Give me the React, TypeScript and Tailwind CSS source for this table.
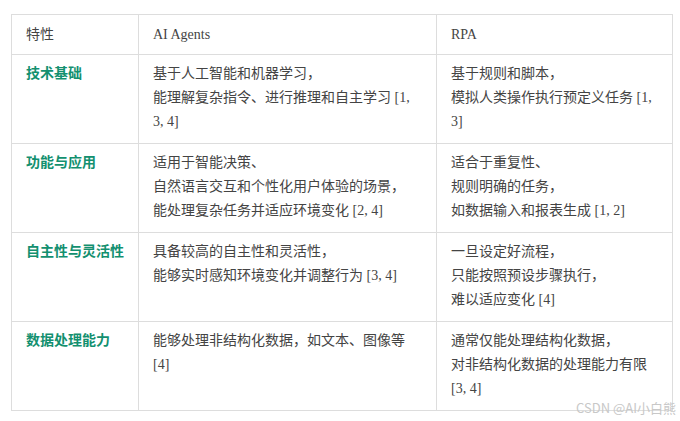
import React from 'react';

type Row = {
    feature: string;
    agents: string[];
    rpa: string[];
};

const rows: Row[] = [
    {
        feature: '技术基础',
        agents: ['基于人工智能和机器学习，', '能理解复杂指令、进行推理和自主学习 [1,', '3, 4]'],
        rpa: ['基于规则和脚本，', '模拟人类操作执行预定义任务 [1,', '3]'],
    },
    {
        feature: '功能与应用',
        agents: ['适用于智能决策、', '自然语言交互和个性化用户体验的场景，', '能处理复杂任务并适应环境变化 [2, 4]'],
        rpa: ['适合于重复性、', '规则明确的任务，', '如数据输入和报表生成 [1, 2]'],
    },
    {
        feature: '自主性与灵活性',
        agents: ['具备较高的自主性和灵活性，', '能够实时感知环境变化并调整行为 [3, 4]'],
        rpa: ['一旦设定好流程，', '只能按照预设步骤执行，', '难以适应变化 [4]'],
    },
    {
        feature: '数据处理能力',
        agents: ['能够处理非结构化数据，如文本、图像等', '[4]'],
        rpa: ['通常仅能处理结构化数据，', '对非结构化数据的处理能力有限', '[3, 4]'],
    },
];

const Lines: React.FC<{ lines: string[] }> = ({ lines }) => (
    <>
        {lines.map((l, i) => (
            <div key={i} className="whitespace-nowrap">{l}</div>
        ))}
    </>
);

const App: React.FC = () => {
    return (
        <div className="relative w-[680px] h-[421px] bg-white pt-[14px] pl-[11px] text-[14px] leading-[24px] text-[#444444] font-['Liberation_Serif','Noto_Sans_CJK_SC',serif]">
            <table className="border-collapse w-[661px] table-fixed">
                <colgroup>
                    <col className="w-[127px]" />
                    <col className="w-[298px]" />
                    <col className="w-[236px]" />
                </colgroup>
                <thead>
                    <tr>
                        <th className="border border-[#dddddd] px-[14px] pt-[8px] pb-[7px] text-left font-normal align-top">特性</th>
                        <th className="border border-[#dddddd] px-[14px] pt-[8px] pb-[7px] text-left font-normal align-top">AI Agents</th>
                        <th className="border border-[#dddddd] px-[14px] pt-[8px] pb-[7px] text-left font-normal align-top">RPA</th>
                    </tr>
                </thead>
                <tbody>
                    {rows.map((r) => (
                        <tr key={r.feature}>
                            <td className="border border-[#dddddd] px-[14px] pt-[7px] pb-[9px] align-top font-bold text-[#13906f]">{r.feature}</td>
                            <td className="border border-[#dddddd] px-[14px] pt-[7px] pb-[9px] align-top"><Lines lines={r.agents} /></td>
                            <td className="border border-[#dddddd] px-[14px] pt-[7px] pb-[9px] align-top"><Lines lines={r.rpa} /></td>
                        </tr>
                    ))}
                </tbody>
            </table>

            {/* watermark */}
            <div className="absolute right-[4px] top-[398px] text-[13px] leading-[20px] text-[#c8c8c8] font-['Noto_Sans_CJK_SC',sans-serif]">
                CSDN @AI小白熊
            </div>
        </div>
    );
};

export default App;
